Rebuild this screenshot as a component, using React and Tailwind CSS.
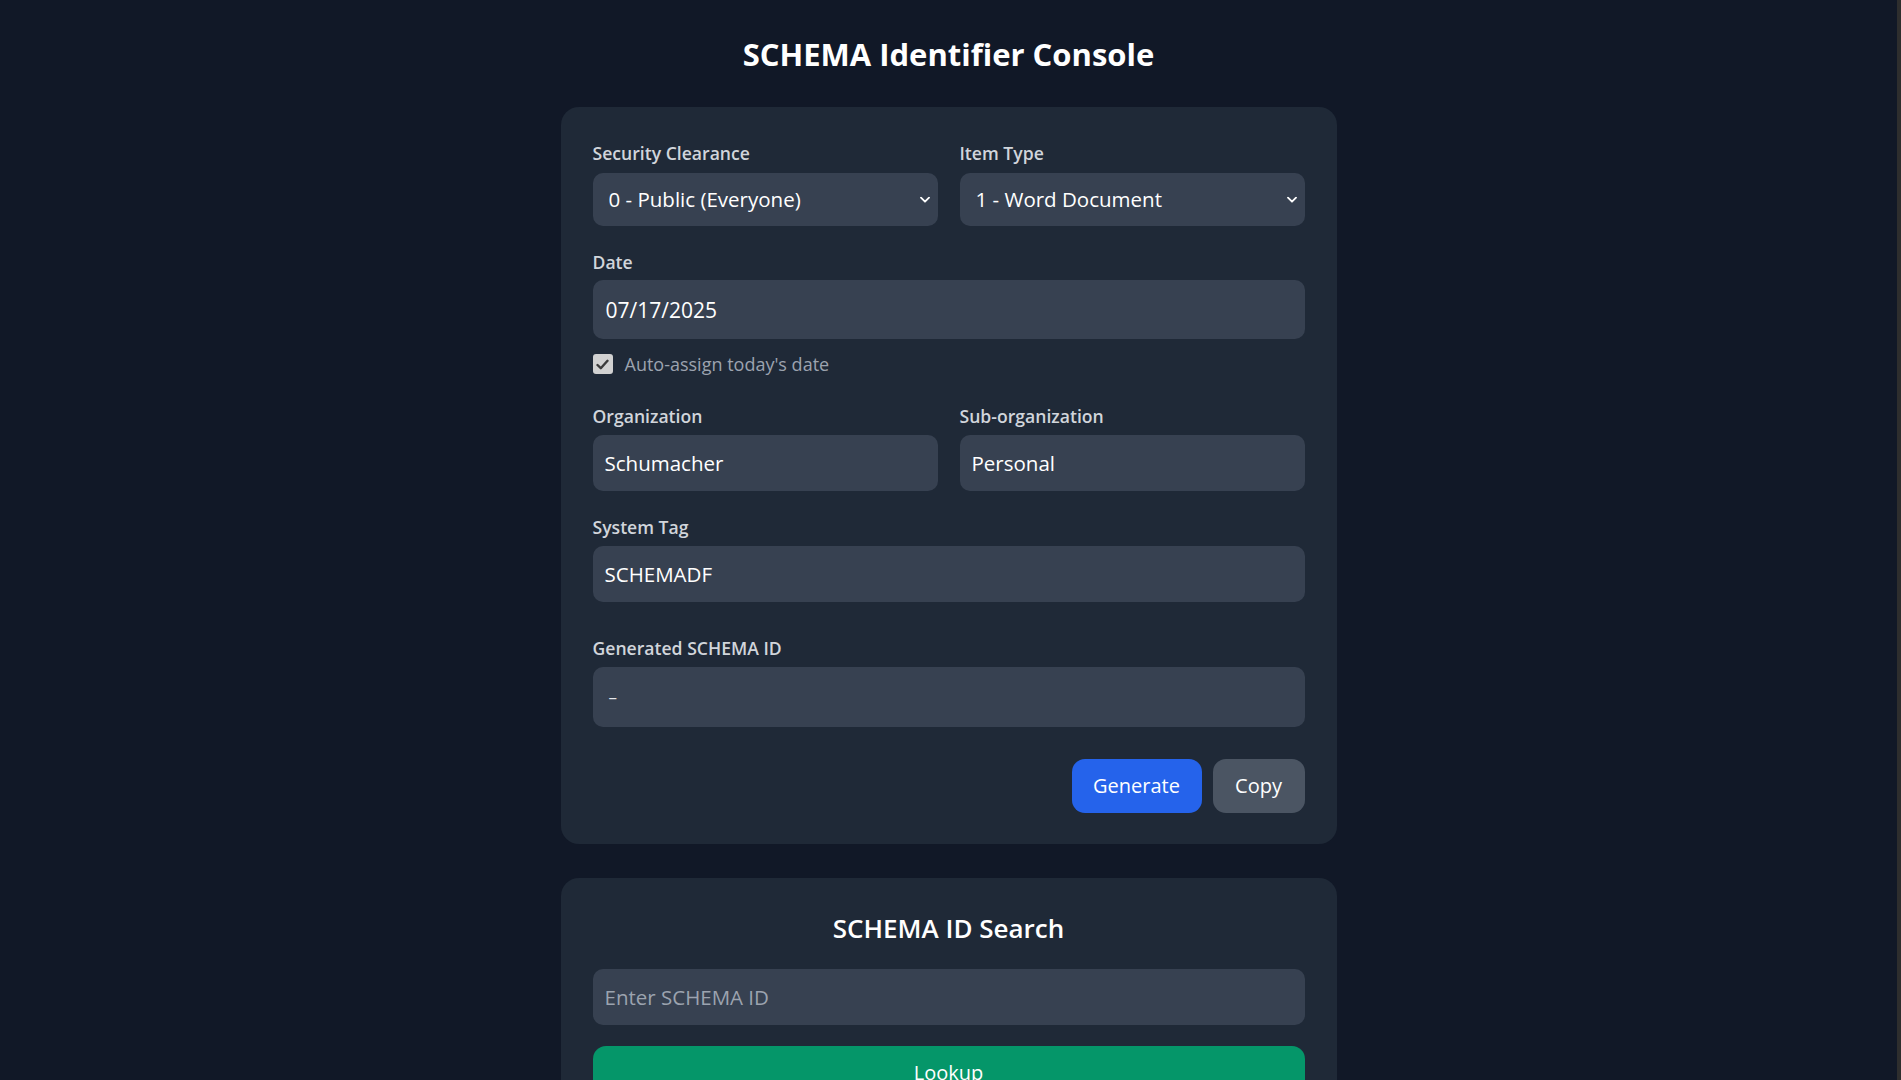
import React, { useState } from 'react';

const label = "block text-[17.6px] leading-6 font-semibold text-[#d1d5db]";
const field =
  "w-full rounded-[10px] bg-[#374151] text-[20.5px] text-white outline-none placeholder:text-[#9ca3af]";

function Chevron() {
  return (
    <svg
      className="pointer-events-none absolute right-[8px] top-1/2 -translate-y-1/2"
      width="10"
      height="7"
      viewBox="0 0 10 7"
      fill="none"
    >
      <path d="M1 1.2 5 5.2 9 1.2" stroke="#ffffff" strokeWidth="1.8" strokeLinecap="round" strokeLinejoin="round" />
    </svg>
  );
}

function SelectField({ title, value, options }) {
  return (
    <div>
      <label className={label}>{title}</label>
      <div className="relative mt-2">
        <select
          defaultValue={value}
          className={`${field} h-[53px] appearance-none pl-[16px] pr-8`}
        >
          {options.map((o) => (
            <option key={o} value={o}>
              {o}
            </option>
          ))}
        </select>
        <Chevron />
      </div>
    </div>
  );
}

function TextField({ title, value, className = "" }) {
  return (
    <div className={className}>
      <label className={label}>{title}</label>
      <input
        type="text"
        defaultValue={value}
        className={`${field} mt-[7px] h-[56px] px-[12px]`}
      />
    </div>
  );
}

export default function App() {
  const [auto, setAuto] = useState(true);

  return (
    <div className="flex min-h-screen bg-[#111827] font-['Open_Sans',sans-serif] text-white">
      <main className="flex-1 pb-10">
        <h1 className="pt-[34px] text-center text-[31px] font-bold leading-[40px]">
          SCHEMA Identifier Console
        </h1>

        {/* Generator */}
        <div className="mx-auto mt-[33px] w-[776px] rounded-[18px] bg-[#1f2937] px-8 pt-[34px] pb-[31px]">
          <div className="grid grid-cols-2 gap-[22px]">
            <SelectField
              title="Security Clearance"
              value="0 - Public (Everyone)"
              options={["0 - Public (Everyone)", "1 - Internal", "2 - Confidential", "3 - Restricted"]}
            />
            <SelectField
              title="Item Type"
              value="1 - Word Document"
              options={["1 - Word Document", "2 - Spreadsheet", "3 - Presentation", "4 - PDF"]}
            />
          </div>

          <div className="mt-6">
            <label className={label}>Date</label>
            <input
              type="text"
              defaultValue="07/17/2025"
              className={`${field} mt-[6px] h-[59px] px-[13px] text-[21px]`}
            />
          </div>

          <label className="mt-[13px] flex h-6 cursor-pointer items-center gap-3 text-[18px] text-[#9ca3af]">
            <span
              onClick={() => setAuto(!auto)}
              className="flex h-5 w-5 items-center justify-center rounded-[3px] bg-[#d1d1d1]"
            >
              {auto && (
                <svg width="13" height="11" viewBox="0 0 13 11" fill="none">
                  <path d="M1.5 6 4.8 9.2 11.5 1.8" stroke="#3a3a3a" strokeWidth="2.4" strokeLinecap="round" strokeLinejoin="round" />
                </svg>
              )}
            </span>
            Auto-assign today's date
          </label>

          <div className="mt-[28px] grid grid-cols-2 gap-[22px]">
            <TextField title="Organization" value="Schumacher" />
            <TextField title="Sub-organization" value="Personal" />
          </div>

          <TextField title="System Tag" value="SCHEMADF" className="mt-6" />

          <div className="mt-[34px]">
            <label className={label}>Generated SCHEMA ID</label>
            <div className="mt-[7px] flex h-[60px] items-center rounded-[10px] bg-[#374151] px-[16px] text-[17px] text-[#e5e7eb]">
              –
            </div>
          </div>

          <div className="mt-8 flex justify-end gap-[11px]">
            <button className="h-[54px] w-[130px] rounded-[13px] bg-[#2563eb] text-[20px] text-white">
              Generate
            </button>
            <button className="h-[54px] w-[92px] rounded-[13px] bg-[#4b5563] text-[20px] text-white">
              Copy
            </button>
          </div>
        </div>

        {/* Search */}
        <div className="mx-auto mt-[34px] w-[776px] rounded-[18px] bg-[#1f2937] px-8 pt-[34px] pb-8">
          <h2 className="text-center text-[26px] font-semibold leading-8">SCHEMA ID Search</h2>
          <input
            type="text"
            placeholder="Enter SCHEMA ID"
            className={`${field} mt-[25px] h-[56px] px-[12px]`}
          />
          <button className="mt-[21px] h-[54px] w-full rounded-[13px] bg-[#059669] text-[20px] text-white">
            Lookup
          </button>
        </div>
      </main>
      <div className="w-[4px] bg-[#2e2e2e]" />
    </div>
  );
}
